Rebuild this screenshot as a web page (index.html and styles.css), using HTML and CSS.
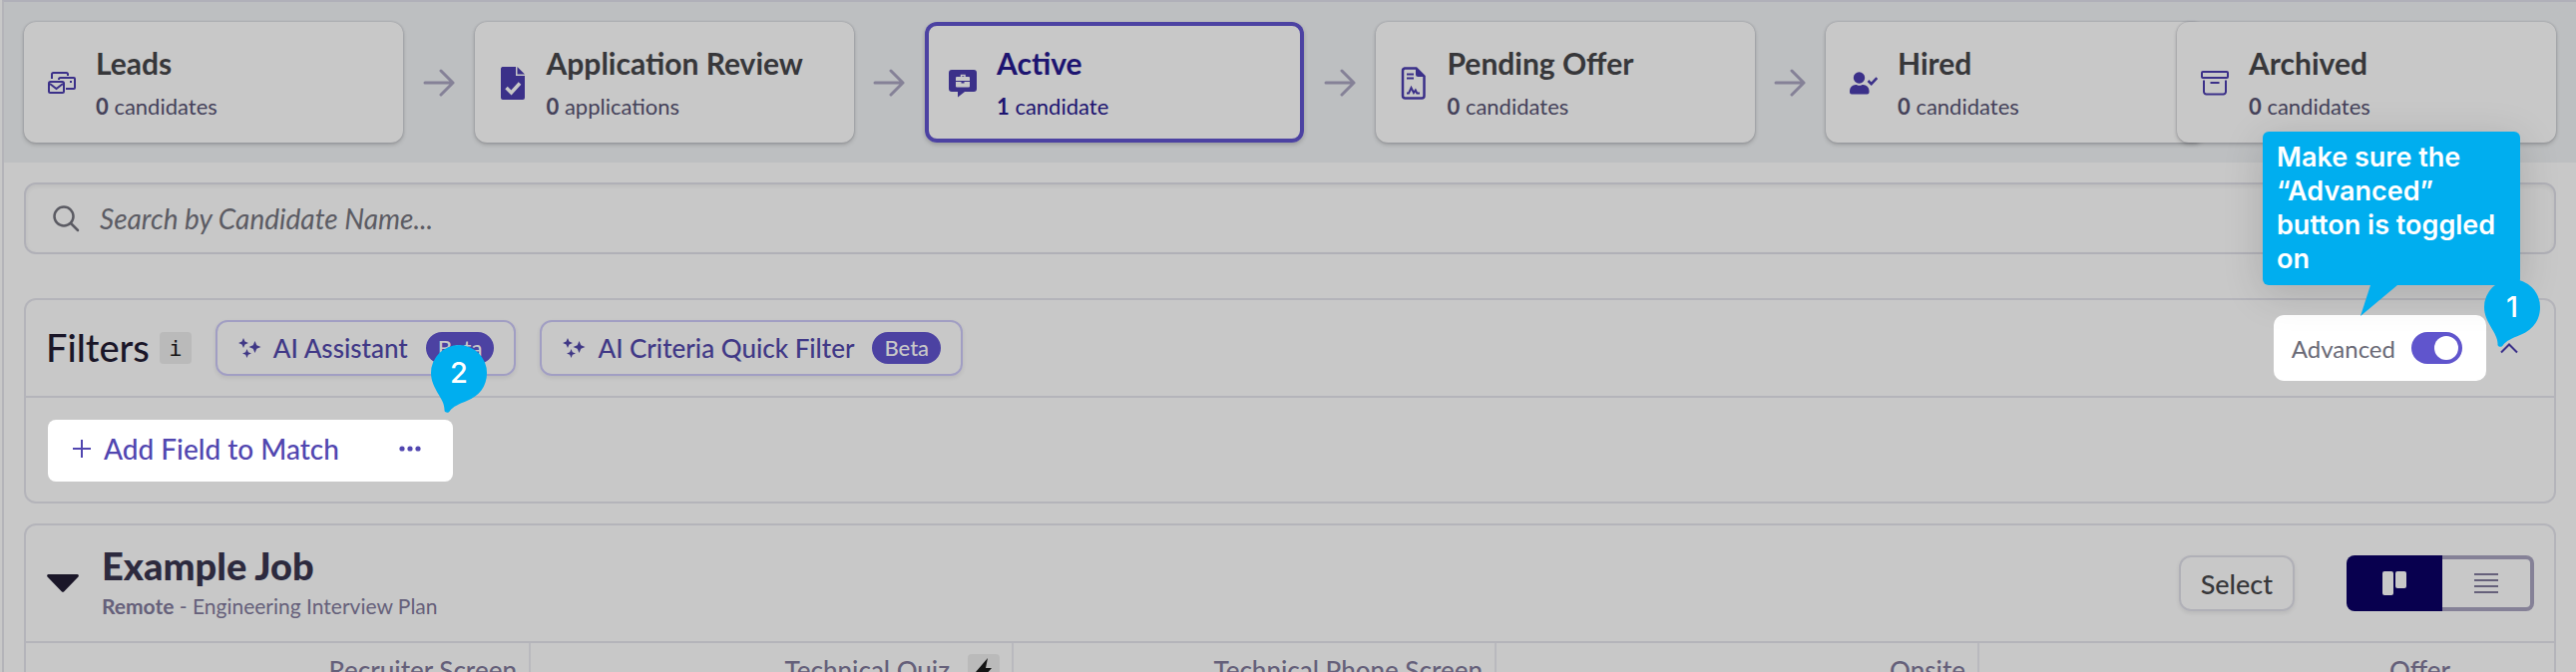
FILE: index.html
```html
<!DOCTYPE html>
<html lang="en">
<head>
  <meta charset="UTF-8" />
  <meta name="viewport" content="width=device-width, initial-scale=1.0" />
  <title>Example Job - Candidates</title>
  <link rel="stylesheet" href="styles.css">
</head>
<body>
  <main class="app">
    <nav class="stages">
      <div class="pipeline">
        <a class="stage" href="#leads">
          <svg class="stage-icon" viewBox="0 0 28 34" fill="none" stroke="currentColor" stroke-width="2">
            <path d="M4 13V8.500a1.500 1.500 0 0 1 1.500-1.500h13A1.500 1.500 0 0 1 20 8.500V10M11 14v-.5a1.500 1.500 0 0 1 1.500-1.500H26a1 1 0 0 1 1 1v9a1 1 0 0 1-1 1h-8" />
            <rect x="1" y="16" width="15" height="11" rx="1.500" />
            <path d="M2 18l6.500 5 6.500-5" />
            <rect x="22" y="15" width="2" height="2" fill="currentColor" stroke="none" />
          </svg>
          <span class="stage-text">
            <span class="stage-name">Leads</span>
            <span class="stage-count"><b>0</b> candidates</span>
          </span>
        </a>
        <svg class="arrow" viewBox="0 0 32 28"><path d="M2 14h28M18 2l12 12-12 12" /></svg>
        <a class="stage" href="#review">
          <svg class="stage-icon" viewBox="0 0 28 34" fill="currentColor">
            <path d="M3.500 1H17v9h9v22a2 2 0 0 1-2 2H4a2 2 0 0 1-2-2V3a2 2 0 0 1 1.500-2zM18.500 1L26 8.500h-7.500z" />
            <path d="M7.500 22l5 5L21 17.500" fill="none" stroke="#c8c8c8" stroke-width="3.500" />
          </svg>
          <span class="stage-text">
            <span class="stage-name">Application Review</span>
            <span class="stage-count"><b>0</b> applications</span>
          </span>
        </a>
        <svg class="arrow" viewBox="0 0 32 28"><path d="M2 14h28M18 2l12 12-12 12" /></svg>
        <a class="stage active" href="#active">
          <svg class="stage-icon" viewBox="0 0 28 34" fill="currentColor">
            <path d="M3 4h22a3 3 0 0 1 3 3v16a3 3 0 0 1-3 3h-9l-7 5.500V26H3a3 3 0 0 1-3-3V7a3 3 0 0 1 3-3z" />
            <path d="M12.500 11V9.500h3.500V11" fill="none" stroke="#c8c8c8" stroke-width="1.500" />
            <path d="M7 12a1 1 0 0 1 1-1h12a1 1 0 0 1 1 1v3H7zM7 16h5.500v1.500h3V16H21v4.500a1 1 0 0 1-1 1H8a1 1 0 0 1-1-1z" fill="#c8c8c8" />
          </svg>
          <span class="stage-text">
            <span class="stage-name">Active</span>
            <span class="stage-count"><b>1</b> candidate</span>
          </span>
        </a>
        <svg class="arrow" viewBox="0 0 32 28"><path d="M2 14h28M18 2l12 12-12 12" /></svg>
        <a class="stage" href="#offer">
          <svg class="stage-icon" viewBox="0 0 28 34" fill="none" stroke="currentColor" stroke-width="2">
            <path d="M5 2.500h11.500l8 8V30a2.500 2.500 0 0 1-2.500 2.500H5.500A2.500 2.500 0 0 1 3 30V5a2.500 2.500 0 0 1 2-2.500z" stroke-width="2.500" />
            <path d="M16 2l9 9h-6.500a2.500 2.500 0 0 1-2.500-2.500z" fill="currentColor" stroke="none" />
            <path d="M7 8.500h7M7 12.500h7M7 27.500h2l2.500-5.500 2.500 5 1.800-2.500 1.500 3h2.700" />
          </svg>
          <span class="stage-text">
            <span class="stage-name">Pending Offer</span>
            <span class="stage-count"><b>0</b> candidates</span>
          </span>
        </a>
        <svg class="arrow" viewBox="0 0 32 28"><path d="M2 14h28M18 2l12 12-12 12" /></svg>
        <a class="stage" href="#hired">
          <svg class="stage-icon" viewBox="0 0 28 34" fill="currentColor">
            <circle cx="9.500" cy="12" r="5.700" />
            <path d="M0 26.500v-1.500a6 6 0 0 1 6-6c1.500 0 2 .8 3.700.8s2.300-.8 3.800-.8a6 6 0 0 1 6 6v1.500a2 2 0 0 1-2 2H2a2 2 0 0 1-2-2z" />
            <path d="M18.500 15l3.200 3.200 5.600-6" fill="none" stroke="currentColor" stroke-width="2.500" />
          </svg>
          <span class="stage-text">
            <span class="stage-name">Hired</span>
            <span class="stage-count"><b>0</b> candidates</span>
          </span>
        </a>
      </div>
      <a class="stage archived" href="#archived">
        <svg class="stage-icon" viewBox="0 0 28 34" fill="none" stroke="currentColor" stroke-width="2">
          <rect x="1" y="6" width="26" height="6" rx="1" />
          <path d="M3 14.500V26a2.500 2.500 0 0 0 2.500 2.500h17A2.500 2.500 0 0 0 25 26V14.500M9.500 17h9" />
        </svg>
        <span class="stage-text">
          <span class="stage-name">Archived</span>
          <span class="stage-count"><b>0</b> candidates</span>
        </span>
      </a>
    </nav>

    <div class="content">
      <label class="search">
        <svg width="28" height="28" viewBox="0 0 28 28" fill="none" stroke="currentColor" stroke-width="2.500" stroke-linecap="round">
          <circle cx="12" cy="12" r="9.500" />
          <path d="M19 19l7 7" />
        </svg>
        <input type="search" placeholder="Search by Candidate Name..." aria-label="Search by Candidate Name" />
      </label>

      <section class="panel filters">
        <header class="filters-header">
          <h2>Filters</h2>
          <button class="info" type="button" aria-label="About filters">i</button>
          <div class="ai-buttons">
            <button class="ai-button" type="button">
              <svg width="24" height="24" viewBox="0 0 24 24" fill="currentColor"><path d="M6 2l1.500 3.500L11 7 7.500 8.500 6 12 4.500 8.500 1 7l3.500-1.500zM17.500 5l1.800 4.200L23.500 11l-4.200 1.800L17.500 17l-1.800-4.200L11.500 11l4.200-1.800zM9.500 13l1.300 3.200L14 17.500l-3.200 1.300L9.500 22l-1.300-3.200L5 17.500l3.200-1.300z" /></svg>
              <span>AI Assistant</span>
              <span class="beta">Beta</span>
            </button>
            <button class="ai-button" type="button">
              <svg width="24" height="24" viewBox="0 0 24 24" fill="currentColor"><path d="M6 2l1.500 3.500L11 7 7.500 8.500 6 12 4.500 8.500 1 7l3.500-1.500zM17.500 5l1.800 4.200L23.500 11l-4.200 1.800L17.500 17l-1.800-4.200L11.500 11l4.200-1.800zM9.500 13l1.300 3.200L14 17.500l-3.200 1.300L9.500 22l-1.300-3.200L5 17.500l3.200-1.300z" /></svg>
              <span>AI Criteria Quick Filter</span>
              <span class="beta">Beta</span>
            </button>
          </div>
          <div class="advanced">
            <label for="advanced">Advanced</label>
            <input class="switch" type="checkbox" id="advanced" checked />
            <div class="tip">
              Make sure the “Advanced” button is toggled on
              <svg class="tip-tail" width="40" height="32" viewBox="0 0 40 32"><path d="M10 0h27L0 31z" /></svg>
            </div>
            <div class="pin pin-one">
              <svg viewBox="0 0 56 70"><path d="M28 0a28 28 0 0 1 28 28c0 14-8 23-20 28-8 3-14 6-17 10-1 3-6 2-5.500-1C14 54 0 44 0 28A28 28 0 0 1 28 0z" /></svg>
              <span>1</span>
            </div>
          </div>
          <button class="collapse" type="button" aria-label="Collapse filters">
            <svg width="20" height="12" viewBox="0 0 20 12" fill="none" stroke="currentColor" stroke-width="2"><path d="M2 10.500l8-8 8 8" /></svg>
          </button>
        </header>
        <div class="filters-body">
          <div class="add-field">
            <button class="add-button" type="button">
              <svg width="20" height="20" viewBox="0 0 20 20" fill="none" stroke="currentColor" stroke-width="2"><path d="M10 1v18M1 10h18" /></svg>
              Add Field to Match
            </button>
            <button class="more" type="button" aria-label="More options">
              <svg width="22" height="6" viewBox="0 0 22 6" fill="currentColor"><circle cx="3" cy="3" r="2.600" /><circle cx="11" cy="3" r="2.600" /><circle cx="19" cy="3" r="2.600" /></svg>
            </button>
            <div class="pin pin-two">
              <svg viewBox="0 0 56 70"><path d="M28 0a28 28 0 0 1 28 28c0 14-8 23-20 28-8 3-14 6-17 10-1 3-6 2-5.500-1C14 54 0 44 0 28A28 28 0 0 1 28 0z" /></svg>
              <span>2</span>
            </div>
          </div>
        </div>
      </section>

      <section class="panel job">
        <header class="job-header">
          <button class="caret" type="button" aria-label="Collapse job">
            <svg width="34" height="20" viewBox="0 0 34 20"><path d="M2.500 1h29a1.500 1.500 0 0 1 1 2.500L18.500 18a2 2 0 0 1-3 0L1.500 3.500a1.500 1.500 0 0 1 1-2.500z" fill="currentColor" /></svg>
          </button>
          <div class="job-title">
            <h1>Example Job</h1>
            <p><b>Remote</b> - Engineering Interview Plan</p>
          </div>
          <button class="select" type="button">Select</button>
          <div class="views">
            <button class="view on" type="button" aria-label="Board view">
              <svg width="24" height="24" viewBox="0 0 24 24" fill="currentColor"><rect width="11" height="24" rx="2" /><rect x="13" width="11" height="17" rx="2" /></svg>
            </button>
            <button class="view" type="button" aria-label="List view">
              <svg width="24" height="22" viewBox="0 0 24 22" stroke="currentColor" stroke-width="2"><path d="M0 2h24M0 8h24M0 14h24M0 20h24" /></svg>
            </button>
          </div>
        </header>
        <div class="board">
          <div class="column">Recruiter Screen</div>
          <div class="column">Technical Quiz
            <span class="bolt"><svg width="18" height="24" viewBox="0 0 18 24"><path d="M13 0L1 14h6L5 24l12-14h-6z" /></svg></span>
          </div>
          <div class="column">Technical Phone Screen</div>
          <div class="column">Onsite</div>
          <div class="column">Offer</div>
        </div>
      </section>
    </div>
  </main>
</body>
</html>
```
FILE: styles.css
```css
* {
  box-sizing: border-box;
}
body {
  margin: 0;
  background: #c8c8c8;
  color: #37373a;
  font-family: Lato, "Noto Sans", sans-serif;
  font-size: 26px;
}
button, input {
  font: inherit;
  color: inherit;
}
button {
  background: none;
  border: none;
  padding: 0;
  cursor: pointer;
}
svg {
  display: block;
  flex: none;
}
h1, h2, p {
  margin: 0;
}
.app {
  height: 100vh;
  overflow: hidden;
  margin-left: 2px;
  border-left: 2px solid #b4b4b9;
  border-top: 2px solid #b0b0b9;
}

/* stages */
.stages {
  display: flex;
  padding: 20px;
  background: #bdbfc1;
}
.pipeline {
  display: flex;
  align-items: center;
  flex: 1;
  min-width: 0;
  justify-content: space-between;
}
.stage {
  flex: none;
  display: flex;
  align-items: center;
  gap: 20px;
  width: 380px;
  height: 121px;
  padding: 0 24px;
  border-radius: 12px;
  background: #c8c8c8;
  box-shadow: 0 0 2px rgba(60, 60, 80, 0.3), 0 2px 4px rgba(0, 0, 0, 0.2);
  color: #37373a;
  text-decoration: none;
}
.stage-icon {
  width: 28px;
  height: 34px;
  color: #3b3089;
}
.stage-text {
  display: flex;
  flex-direction: column;
  gap: 6px;
  padding-top: 4px;
}
.stage-name {
  font-size: 30px;
  font-weight: bold;
  line-height: 38px;
}
.stage-count {
  font-size: 22px;
  line-height: 38px;
  color: #45425a;
}
.stage.active {
  box-shadow: inset 0 0 0 4px #4c42a2, 0 2px 4px rgba(0, 0, 0, 0.2);
}
.active .stage-name, .active .stage-count {
  color: #1d1470;
}
.archived {
  margin-left: -28px;
}
.arrow {
  width: 32px;
  height: 28px;
  fill: none;
  stroke: #858197;
  stroke-width: 3;
  stroke-linecap: round;
  stroke-linejoin: round;
}

.content {
  display: flex;
  flex-direction: column;
  padding: 20px;
}
.search {
  display: flex;
  align-items: center;
  gap: 20px;
  height: 72px;
  margin-bottom: 44px;
  padding: 0 26px;
  border: 2px solid #b0b0b7;
  border-radius: 12px;
  box-shadow: inset 0 2px 4px rgba(0, 0, 0, 0.06);
  color: #5b5b63;
}
.search input {
  flex: 1;
  padding: 0;
  border: none;
  outline: none;
  background: none;
  font-size: 28px;
  font-style: italic;
}
.search input::placeholder {
  color: #5b5b63;
}
.panel {
  border: 2px solid #b4b4ba;
  border-radius: 12px;
}

/* filters */
.filters {
  margin-bottom: 20px;
}
.filters-header {
  display: flex;
  align-items: center;
  height: 98px;
  padding: 0 22px 0 20px;
  border-bottom: 2px solid #b4b4ba;
}
.filters h2 {
  font-size: 38px;
  line-height: 44px;
  padding-bottom: 2px;
  font-weight: 500;
  color: #1a1628;
}
.info {
  width: 32px;
  height: 32px;
  margin-left: 10px;
  border-radius: 4px;
  background: #bababa;
  color: #141414;
  font-family: "DejaVu Sans Mono", monospace;
  font-size: 22px;
}
.ai-buttons {
  display: flex;
  gap: 24px;
  margin-left: 24px;
}
.ai-button {
  display: flex;
  align-items: center;
  gap: 12px;
  height: 56px;
  padding: 0 20px;
  border: 2px solid #a19ec3;
  border-radius: 12px;
  box-shadow: 0 2px 4px rgba(0, 0, 0, 0.08);
  color: #403886;
  font-weight: 500;
}
.beta {
  height: 32px;
  margin-left: 6px;
  padding: 0 12px;
  border-radius: 16px;
  background: #4c42a2;
  color: #c8c8c8;
  font-size: 22px;
  line-height: 32px;
}
.advanced {
  position: relative;
  display: flex;
  align-items: center;
  gap: 16px;
  height: 66px;
  margin-left: auto;
  padding: 0 24px 0 18px;
  border-radius: 10px;
  background: #fff;
  color: #6a6a76;
  font-size: 24px;
}
.switch {
  appearance: none;
  display: flex;
  align-items: center;
  justify-content: flex-end;
  width: 51px;
  height: 32px;
  margin: 0;
  padding: 4px;
  border-radius: 16px;
  background: #6055cd;
}
.switch::before {
  content: "";
  width: 24px;
  height: 24px;
  border-radius: 50%;
  background: #fff;
}
.collapse {
  display: flex;
  justify-content: center;
  width: 46px;
  color: #3b3089;
}
.filters-body {
  display: flex;
  padding: 22px 22px 20px;
}
.add-field {
  position: relative;
  display: flex;
  align-items: center;
  gap: 60px;
  height: 62px;
  padding: 0 32px 4px 24px;
  border-radius: 8px;
  background: #fff;
  color: #5146b0;
}
.add-button {
  display: flex;
  align-items: center;
  gap: 12px;
  font-size: 28px;
  font-weight: 500;
}

/* walkthrough callouts */
.tip {
  position: absolute;
  right: -34px;
  bottom: 96px;
  width: 258px;
  padding: 9px 14px;
  border-radius: 6px;
  background: #00aeef;
  box-shadow: 0 8px 40px rgba(0, 0, 0, 0.15);
  color: #fff;
  font: 600 27px/34px Inter, sans-serif;
}
.tip-tail {
  position: absolute;
  left: 98px;
  top: 100%;
  fill: #00aeef;
}
.pin {
  position: absolute;
  width: 56px;
  height: 70px;
  color: #fff;
  font: 500 29px/56px Inter, sans-serif;
  text-align: center;
}
.pin svg {
  position: absolute;
  inset: 0;
  fill: #00aeef;
}
.pin span {
  position: relative;
}
.pin-one {
  right: -54px;
  bottom: 32px;
}
.pin-two {
  right: -34px;
  bottom: 67px;
}

/* job */
.job-header {
  display: flex;
  align-items: center;
  height: 118px;
  padding: 0 20px;
  border-bottom: 2px solid #b4b4ba;
}
.caret {
  color: #1a1628;
}
.job-title {
  flex: 1;
  margin-left: 22px;
}
.job-title h1 {
  font-size: 38px;
  line-height: 42px;
  padding-bottom: 4px;
  font-weight: 900;
  color: #2d2a3e;
}
.job-title p {
  font-size: 21px;
  line-height: 32px;
  color: #65607a;
}
.select {
  height: 56px;
  padding: 0 20px;
  border: 2px solid #b0b0b7;
  border-radius: 12px;
  box-shadow: 0 2px 4px rgba(0, 0, 0, 0.08);
  font-size: 27px;
  font-weight: 500;
}
.views {
  display: flex;
  margin-left: 52px;
}
.view {
  display: flex;
  align-items: center;
  justify-content: center;
  width: 92px;
  height: 56px;
  border: 4px solid #858197;
  border-left: none;
  border-radius: 0 8px 8px 0;
  color: #65607a;
}
.view.on {
  width: 96px;
  border: none;
  border-radius: 8px 0 0 8px;
  background: #08004f;
  color: #c8c8c8;
}
.board {
  display: grid;
  grid-template-columns: repeat(5, 1fr);
  padding: 0 92px 0 22px;
}
.column {
  display: flex;
  align-items: center;
  justify-content: flex-end;
  gap: 18px;
  height: 54px;
  padding: 0 12px;
  border-right: 2px solid #b9b9be;
  color: #65607a;
  font-size: 26px;
  font-weight: 500;
}
.column:last-child {
  border-right: none;
}
.bolt {
  display: flex;
  align-items: center;
  justify-content: center;
  width: 32px;
  height: 32px;
  border-radius: 4px;
  background: #bababa;
  fill: #141414;
}
```
